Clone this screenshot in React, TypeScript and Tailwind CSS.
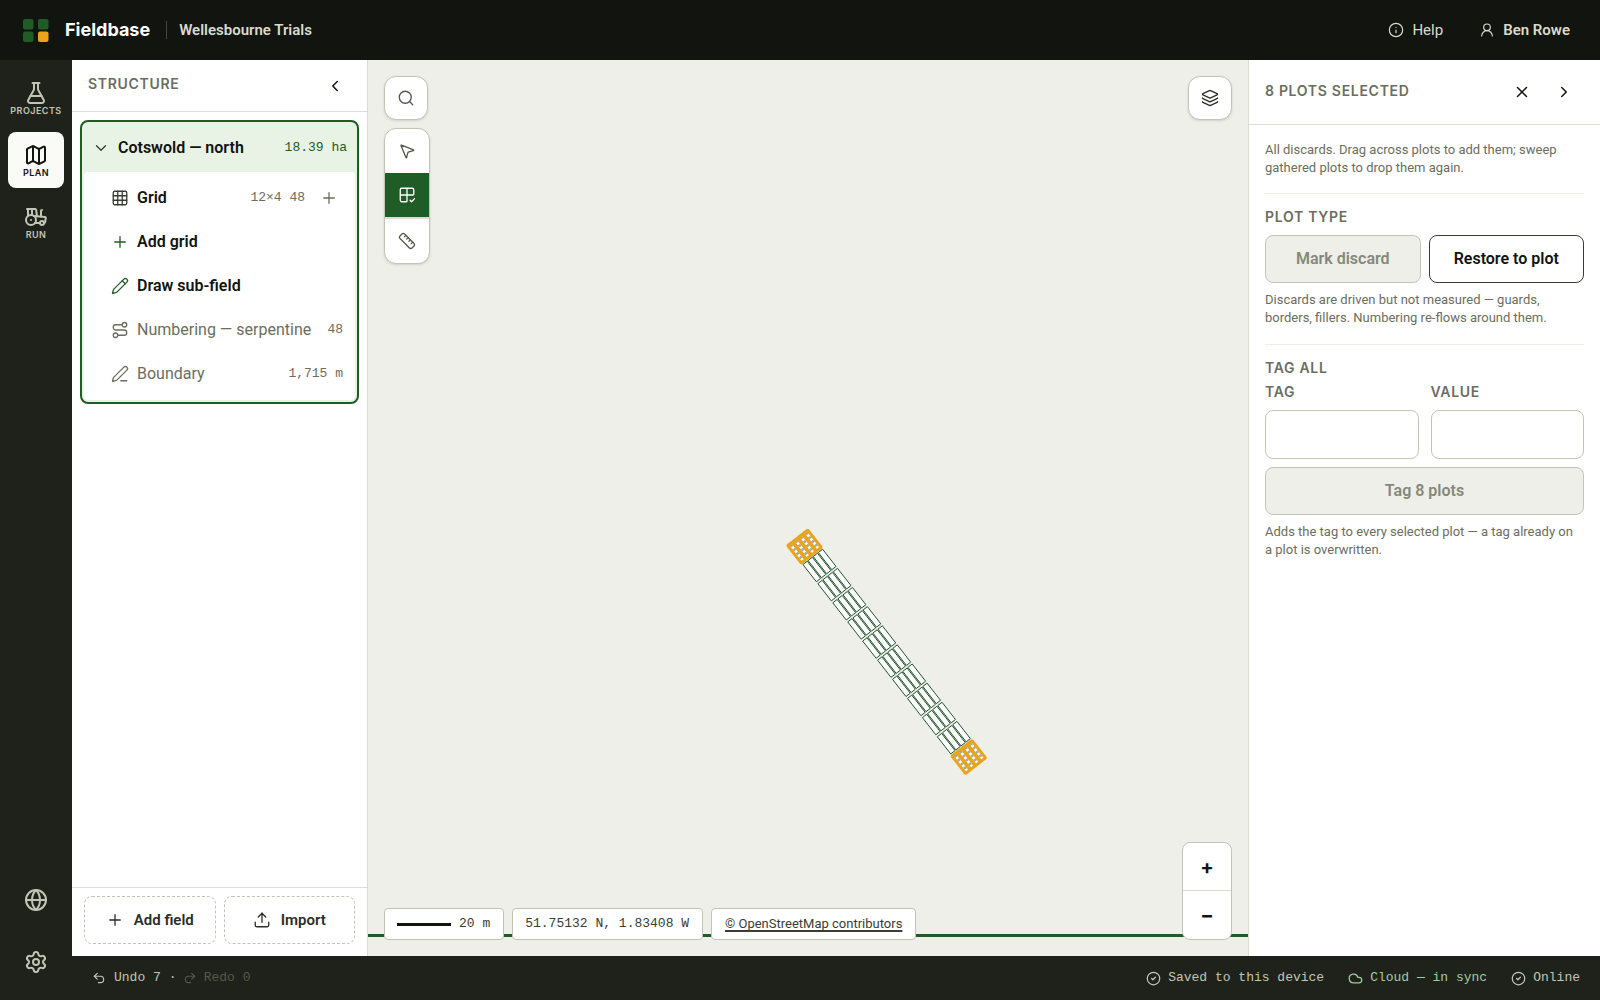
import { useState } from 'react'
import {
  ChevronDown,
  ChevronLeft,
  ChevronRight,
  CircleCheck,
  Cloud,
  FlaskConical,
  Globe,
  Grid2x2Check,
  Grid3x3,
  Info,
  Layers,
  Map as MapIcon,
  MousePointer2,
  PenLine,
  Pencil,
  Plus,
  Redo2,
  Route,
  Ruler,
  Search,
  Settings,
  Tractor,
  Undo2,
  Upload,
  UserRound,
  X,
} from 'lucide-react'

const navItems = [
  { icon: FlaskConical, label: 'Projects' },
  { icon: MapIcon, label: 'Plan' },
  { icon: Tractor, label: 'Run' },
]

const treeItems = [
  { icon: Grid3x3, label: 'Grid', meta: '12×4 48', tone: 'text-[#3a3d33]', strong: true, add: true },
  { icon: Plus, label: 'Add grid', meta: '', tone: 'text-[#1f5c26]', strong: true, add: false },
  { icon: Pencil, label: 'Draw sub-field', meta: '', tone: 'text-[#1f5c26]', strong: true, add: false },
  { icon: Route, label: 'Numbering — serpentine', meta: '48', tone: 'text-[#6b6e5e]', strong: false, add: false },
  { icon: PenLine, label: 'Boundary', meta: '1,715 m', tone: 'text-[#6b6e5e]', strong: false, add: false },
]

const tools = [
  { icon: MousePointer2, label: 'Select' },
  { icon: Grid2x2Check, label: 'Select plots' },
  { icon: Ruler, label: 'Measure' },
]

const ROWS = 12
const COLS = 4
const ROW_PITCH = 24.27
const COL_PITCH = 6.5

function Logo() {
  return (
    <svg width="26" height="23" viewBox="0 0 26 23" aria-hidden="true">
      <rect x="0" y="0" width="10.5" height="10.5" rx="2" fill="#1f5c26" />
      <rect x="15" y="0" width="10.5" height="10.5" rx="2" fill="#1f5c26" />
      <rect x="0" y="12.5" width="10.5" height="10.5" rx="2" fill="#1f5c26" />
      <rect x="15" y="12.5" width="10.5" height="10.5" rx="2" fill="#e9a41b" />
    </svg>
  )
}

function TopBar() {
  return (
    <header className="flex h-[60px] shrink-0 items-center bg-[#12140f] pr-[30px] pl-[23px] text-[15px] text-[#d9dbcd]">
      <Logo />
      <span className="ml-4 font-[Inter,sans-serif] text-lg font-bold text-white">Fieldbase</span>
      <span className="mr-3 ml-4 h-[18px] w-px bg-[#44483b]" />
      <span className="font-semibold">Wellesbourne Trials</span>
      <button className="ml-auto flex items-center gap-2">
        <Info size={16} strokeWidth={1.75} />
        Help
      </button>
      <button className="ml-9 flex items-center gap-2 font-semibold">
        <UserRound size={16} strokeWidth={1.75} />
        Ben Rowe
      </button>
    </header>
  )
}

function NavRail() {
  const [active, setActive] = useState('Plan')

  return (
    <nav className="flex w-[72px] shrink-0 flex-col items-center gap-1.5 bg-[#1f221b] py-2.5 text-[#c3c5b4]">
      {navItems.map((item) => {
        const Icon = item.icon
        const isActive = item.label === active
        return (
          <button
            key={item.label}
            onClick={() => setActive(item.label)}
            className={`flex size-14 flex-col items-center justify-center rounded-lg pt-0.5 font-[Inter,sans-serif] text-[9px] leading-3 font-semibold tracking-wider uppercase ${
              isActive ? 'bg-[#fafaf7] text-[#12140f]' : ''
            }`}
          >
            <Icon size={24} strokeWidth={2} />
            {item.label}
          </button>
        )
      })}
      <button aria-label="Language" className="mt-auto flex size-14 items-center justify-center">
        <Globe size={24} />
      </button>
      <button aria-label="Settings" className="flex size-14 items-center justify-center">
        <Settings size={24} />
      </button>
    </nav>
  )
}

function StructurePanel() {
  return (
    <aside className="flex w-[296px] shrink-0 flex-col border-r border-[#dcdecf] bg-white">
      <div className="flex h-[52px] items-center justify-between border-b border-[#dcdecf] pr-5 pl-4">
        <h2 className="pb-1 font-[Inter,sans-serif] text-sm font-semibold tracking-wider text-[#6b6e5e] uppercase">
          Structure
        </h2>
        <button aria-label="Collapse panel" className="flex size-6 items-center justify-center">
          <ChevronLeft size={18} />
        </button>
      </div>

      <div className="flex-1 p-2">
        <div className="rounded-lg border-2 border-[#1f5c26] bg-[#e8f2e5] p-0.5">
          <button className="flex h-12 w-full items-center px-2 text-left">
            <ChevronDown size={18} strokeWidth={1.75} className="text-[#3a3d33]" />
            <span className="ml-2 text-base font-semibold">Cotswold — north</span>
            <span className="ml-auto font-[Liberation_Mono,monospace] text-[13px] text-[#1f5c26]">18.39 ha</span>
          </button>
          <ul className="rounded bg-white py-1">
            {treeItems.map((item) => {
              const Icon = item.icon
              return (
                <li key={item.label} className="flex h-11 items-center pr-3 pl-[27px]">
                  <button className="flex flex-1 items-center gap-2 text-left whitespace-nowrap">
                    <Icon size={18} strokeWidth={1.75} className={item.tone} />
                    <span className={item.strong ? 'text-base font-semibold' : 'text-base text-[#6b6e5e]'}>
                      {item.label}
                    </span>
                    <span className="ml-auto font-[Liberation_Mono,monospace] text-[13px] text-[#6b6e5e]">
                      {item.meta}
                    </span>
                  </button>
                  {item.add && (
                    <button aria-label="Add to grid" className="ml-2.5 flex size-7 items-center justify-center text-[#6b6e5e]">
                      <Plus size={18} strokeWidth={1.75} />
                    </button>
                  )}
                </li>
              )
            })}
          </ul>
        </div>
      </div>

      <div className="flex gap-2 border-t border-[#dcdecf] px-3 pt-2 pb-3">
        <button className="flex h-12 flex-1 items-center justify-center gap-2.5 rounded-lg border border-dashed border-[#c3c5b4] text-[15px] font-semibold text-[#2b2e25]">
          <Plus size={18} strokeWidth={1.75} />
          Add field
        </button>
        <button className="flex h-12 flex-1 items-center justify-center gap-2.5 rounded-lg border border-dashed border-[#c3c5b4] text-[15px] font-semibold text-[#2b2e25]">
          <Upload size={18} strokeWidth={1.75} />
          Import
        </button>
      </div>
    </aside>
  )
}

// Plots run along the local x axis; the group is rotated to the field heading
function TrialGrid() {
  const plots = []
  for (let row = 0; row < ROWS; row++) {
    for (let col = 0; col < COLS; col++) {
      plots.push({ row, col, x: row * ROW_PITCH, y: -25.2 + col * COL_PITCH, guard: row === 0 || row === ROWS - 1 })
    }
  }

  return (
    <svg className="absolute inset-0 h-full w-full" aria-label="Trial plots">
      <rect x="0" y="874" width="100%" height="3" fill="#1f5c26" />
      <g transform="translate(419.8 485.6) rotate(52.03)">
        {plots.map((p) =>
          p.guard ? (
            <g key={`${p.row}-${p.col}`}>
              <rect x={p.x} y={p.y} width="22" height="5.7" fill="#fff" />
              <path d={`M${p.x + 1} ${p.y + 2.85}h20`} stroke="#a7a9a8" strokeWidth="3" strokeDasharray="2.5 2.5" />
              <rect x={p.x} y={p.y} width="22" height="5.7" rx="0.5" fill="none" stroke="#e9a41b" strokeWidth="3" />
            </g>
          ) : (
            <rect
              key={`${p.row}-${p.col}`}
              x={p.x}
              y={p.y}
              width="21.8"
              height="5.4"
              fill="#fff"
              stroke="#1d4f28"
              strokeWidth="0.9"
            />
          ),
        )}
      </g>
    </svg>
  )
}

function MapView() {
  const [tool, setTool] = useState('Select plots')

  return (
    <main className="relative min-w-0 flex-1 overflow-hidden bg-[#eeefe9]">
      <TrialGrid />

      <div className="absolute top-4 left-4 flex flex-col items-start gap-2">
        <button
          aria-label="Search"
          className="flex size-11 items-center justify-center rounded-xl border border-[#c3c5b4] bg-white text-[#55584a] shadow-sm"
        >
          <Search size={18} strokeWidth={1.75} />
        </button>
        <div className="flex flex-col overflow-hidden rounded-xl border border-[#c3c5b4] bg-white text-[#55584a] shadow-sm">
          {tools.map((item) => {
            const Icon = item.icon
            const isActive = item.label === tool
            return (
              <button
                key={item.label}
                aria-label={item.label}
                onClick={() => setTool(item.label)}
                className={`flex items-center justify-center ${
                  isActive ? 'h-[46px] w-11 border-b-2 border-[#dcdecf] bg-[#1f5c26] text-white' : 'size-11'
                }`}
              >
                <Icon size={18} strokeWidth={1.75} />
              </button>
            )
          })}
        </div>
      </div>

      <button
        aria-label="Layers"
        className="absolute top-4 right-4 flex size-11 items-center justify-center rounded-xl border border-[#c3c5b4] bg-white text-[#2b2e25] shadow-sm"
      >
        <Layers size={18} strokeWidth={1.75} />
      </button>

      <div className="absolute bottom-4 left-4 flex gap-2 text-[13px] text-[#3a3d33]">
        <div className="flex h-8 items-center gap-2 rounded border border-[#c3c5b4] bg-white pr-[13px] pl-3 font-[Liberation_Mono,monospace]">
          <span className="h-[3px] w-[54px] bg-[#12140f]" />
          20 m
        </div>
        <div className="flex h-8 items-center rounded border border-[#c3c5b4] bg-white pr-[13px] pl-3 font-[Liberation_Mono,monospace]">
          51.75132 N, 1.83408 W
        </div>
        <div className="flex h-8 items-center rounded border border-[#c3c5b4] bg-white px-[13px]">
          <a href="#copyright" className="underline decoration-2 underline-offset-2">
            © OpenStreetMap contributors
          </a>
        </div>
      </div>

      <div className="absolute right-4 bottom-4 flex w-[50px] flex-col rounded-lg border border-[#c3c5b4] bg-white font-[Inter,sans-serif] text-xl font-bold">
        <button aria-label="Zoom in" className="h-12 border-b border-[#dcdecf]">
          +
        </button>
        <button aria-label="Zoom out" className="h-12">
          −
        </button>
      </div>
    </main>
  )
}

function SectionTitle({ children }: { children: string }) {
  return (
    <h3 className="font-[Inter,sans-serif] text-sm leading-4 font-semibold tracking-wider text-[#6b6e5e] uppercase">
      {children}
    </h3>
  )
}

function SelectionPanel() {
  const [tag, setTag] = useState('')
  const [value, setValue] = useState('')

  return (
    <aside className="w-[352px] shrink-0 border-l border-[#dcdecf] bg-white">
      <div className="flex h-[65px] items-center border-b border-[#dcdecf] pr-6 pl-4">
        <h2 className="flex-1 pb-0.5 font-[Inter,sans-serif] text-sm font-semibold tracking-wider text-[#6b6e5e] uppercase">
          8 plots selected
        </h2>
        <button aria-label="Clear selection" className="flex size-6 items-center justify-center">
          <X size={18} />
        </button>
        <button aria-label="Collapse panel" className="ml-[18px] flex size-6 items-center justify-center">
          <ChevronRight size={18} />
        </button>
      </div>

      <div className="px-4 text-[13px] leading-[18px] text-[#6b6e5e]">
        <p className="border-b border-[#eeefe9] pt-4 pb-4">
          All discards. Drag across plots to add them; sweep gathered plots to drop them again.
        </p>

        <section className="border-b border-[#eeefe9] pt-[15px] pb-[17px]">
          <SectionTitle>Plot type</SectionTitle>
          <div className="mt-2.5 mb-2 flex gap-2 text-base font-semibold">
            <button disabled className="h-12 flex-1 rounded-lg border border-[#c3c5b4] bg-[#eeefe9] text-[#85887a]">
              Mark discard
            </button>
            <button className="h-12 flex-1 rounded-lg border border-[#3a3d33] text-[#12140f]">Restore to plot</button>
          </div>
          <p>Discards are driven but not measured — guards, borders, fillers. Numbering re-flows around them.</p>
        </section>

        <section className="pt-[15px]">
          <SectionTitle>Tag all</SectionTitle>
          <div className="mt-2 mb-2 flex gap-3">
            <label className="min-w-0 flex-1">
              <SectionTitle>Tag</SectionTitle>
              <input
                value={tag}
                onChange={(e) => setTag(e.target.value)}
                className="mt-2.5 h-[49px] w-full rounded-lg border border-[#c3c5b4] px-3 text-base"
              />
            </label>
            <label className="min-w-0 flex-1">
              <SectionTitle>Value</SectionTitle>
              <input
                value={value}
                onChange={(e) => setValue(e.target.value)}
                className="mt-2.5 h-[49px] w-full rounded-lg border border-[#c3c5b4] px-3 text-base"
              />
            </label>
          </div>
          <button
            disabled
            className="mb-2 h-12 w-full rounded-lg border border-[#c3c5b4] bg-[#eeefe9] text-base font-semibold text-[#85887a]"
          >
            Tag 8 plots
          </button>
          <p className="pr-2">Adds the tag to every selected plot — a tag already on a plot is overwritten.</p>
        </section>
      </div>
    </aside>
  )
}

function StatusBar() {
  return (
    <footer className="flex h-11 shrink-0 items-center bg-[#1f221b] px-5 font-[Liberation_Mono,monospace] text-[13px] text-[#c3c5b4]">
      <button className="flex items-center gap-2">
        <Undo2 size={14} />
        Undo 7
      </button>
      <span className="mr-1.5 ml-2">·</span>
      <button disabled className="flex items-center gap-[7px] text-[#55584a]">
        <Redo2 size={14} />
        Redo 0
      </button>
      <span className="ml-auto flex items-center gap-[7px]">
        <CircleCheck size={15} />
        Saved to this device
      </span>
      <span className="ml-6 flex items-center gap-[7px] text-[#9fce9f]">
        <Cloud size={15} />
        Cloud — in sync
      </span>
      <span className="ml-6 flex items-center gap-[7px]">
        <CircleCheck size={15} />
        Online
      </span>
    </footer>
  )
}

export default function App() {
  return (
    <div className="flex h-screen flex-col bg-[#1f221b] font-[Roboto,sans-serif] text-[#12140f]">
      <TopBar />
      <div className="flex min-h-0 flex-1">
        <NavRail />
        <div className="flex min-w-0 flex-1 flex-col">
          <div className="flex min-h-0 flex-1">
            <StructurePanel />
            <MapView />
            <SelectionPanel />
          </div>
          <StatusBar />
        </div>
      </div>
    </div>
  )
}
